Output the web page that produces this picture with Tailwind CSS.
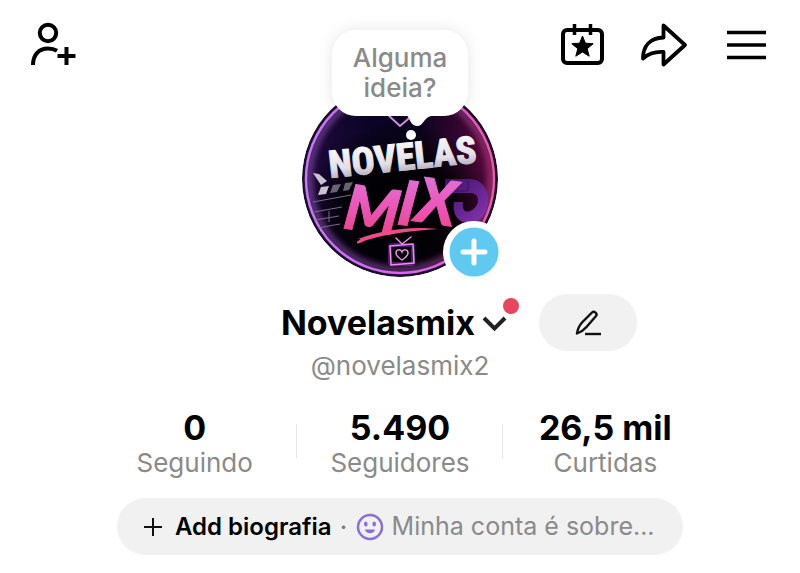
<!DOCTYPE html>
<html lang="pt-BR">
<head>
    <meta charset="UTF-8">
    <meta name="viewport" content="width=device-width, initial-scale=1.0">
    <title>Novelasmix</title>
    <script src="https://cdn.jsdelivr.net/npm/@tailwindcss/browser@4"></script>
</head>
<body class="min-h-screen bg-white text-black font-['Inter','Liberation_Sans',sans-serif]">
    <!-- Top bar with avatar -->
    <header class="grid grid-cols-[1fr_auto_1fr] items-start px-7 pt-5">
        <button aria-label="Adicionar amigos" class="w-12 h-12">
            <svg viewBox="0 0 48 48" class="w-12 h-12" fill="none" stroke="#000" stroke-width="4">
                <circle cx="20" cy="13" r="8.2"/>
                <path d="M5 45C5 34.500 11 28.500 20 28.500C23.500 28.500 26.500 29.300 29 30.800"/>
                <path d="M38.500 27v18M29.500 36h18"/>
            </svg>
        </button>

        <div class="relative w-[196px] h-[196px] mt-[61px]">
            <!-- Profile picture -->
            <svg viewBox="0 0 196 196" class="w-full h-full rounded-full" role="img" aria-label="Novelas Mix">
                <defs>
                    <linearGradient id="ring" x1="0" y1="0" x2="1" y2="0">
                        <stop offset="0" stop-color="#c57af5"/>
                        <stop offset="0.6" stop-color="#d468ea"/>
                        <stop offset="1" stop-color="#e65aa8"/>
                    </linearGradient>
                    <linearGradient id="bg" x1="0" y1="0" x2="1" y2="0">
                        <stop offset="0" stop-color="#1d0838"/>
                        <stop offset="0.35" stop-color="#0c0528"/>
                        <stop offset="0.6" stop-color="#0c0420"/>
                        <stop offset="1" stop-color="#57083c"/>
                    </linearGradient>
                    <radialGradient id="shade" cx="0.5" cy="0.68" r="0.5">
                        <stop offset="0" stop-color="#000"/>
                        <stop offset="0.6" stop-color="#000" stop-opacity="0.8"/>
                        <stop offset="1" stop-color="#000" stop-opacity="0"/>
                    </radialGradient>
                    <linearGradient id="silver" x1="0" y1="0" x2="0" y2="1">
                        <stop offset="0" stop-color="#fff"/>
                        <stop offset="0.6" stop-color="#e4dfe8"/>
                        <stop offset="1" stop-color="#96909f"/>
                    </linearGradient>
                    <linearGradient id="pink" x1="0" y1="0" x2="0" y2="1">
                        <stop offset="0.1" stop-color="#dd78de"/>
                        <stop offset="0.55" stop-color="#ec55b5"/>
                        <stop offset="0.9" stop-color="#ee3f80"/>
                    </linearGradient>
                    <linearGradient id="violet" x1="0" y1="0" x2="1" y2="1">
                        <stop offset="0" stop-color="#3b1263"/>
                        <stop offset="1" stop-color="#8a35b5"/>
                    </linearGradient>
                    <filter id="glow" x="-20%" y="-20%" width="140%" height="140%">
                        <feGaussianBlur stdDeviation="3"/>
                    </filter>
                </defs>
                <circle cx="98" cy="98" r="98" fill="#0a0216"/>
                <circle cx="98" cy="98" r="93" fill="url(#bg)"/>
                <circle cx="98" cy="98" r="93" fill="url(#shade)"/>
                <circle cx="98" cy="98" r="91" fill="none" stroke="url(#ring)" stroke-width="6" opacity="0.5" filter="url(#glow)"/>
                <circle cx="98" cy="98" r="94" fill="none" stroke="url(#ring)" stroke-width="2.500"/>
                <path d="M85 33l13 12 14-12" fill="none" stroke="#d394dc" stroke-width="2"/>
                <!-- clapperboard -->
                <g fill="#c9c3d0">
                    <path d="M11 92l6 1 8 7-6 4z"/>
                    <path d="M19 106l8-1-3 8-8 1z"/>
                    <path d="M31 104l8-1-4 8-7 1zM43 102l8-1-4 8-6 1z" opacity="0.5"/>
                </g>
                <path d="M11 121l38-7M12 131l28-5M13 139l24-4M16 147l22-4M27 130v11" fill="none" stroke="#77707f" stroke-width="1"/>
                <!-- big letter shape behind the title -->
                <path d="M143 98h24c14 0 21 12 19 25-2 12-9 19-19 19-11 0-17-9-15-21h9c-1 8 2 11 7 9 9-3 12-17 1-18h-26z" fill="url(#violet)"/>
                <path d="M143 110h23V99" fill="none" stroke="#3b1263" stroke-width="1"/>
                <text x="28" y="97" transform="rotate(-6 28 97)" font-family="'Roboto Condensed',Roboto,sans-serif" font-weight="800" font-size="38" fill="url(#silver)" stroke="url(#silver)" stroke-width="1">NOVELAS</text>
                <text x="40 94 112" y="147 143 140" rotate="8" font-family="Lato,sans-serif" font-style="italic" font-weight="900" font-size="62" fill="url(#pink)" stroke="url(#pink)" stroke-width="1">MIX</text>
                <path d="M56 158C80 149 108 145 136 148C108 150 84 153 65 159C58 162 54 164 55 161C58 158 60 158 56 158Z" fill="#ef4b88"/>
                <!-- neon tv -->
                <g fill="none" stroke="#8c2fc0" stroke-width="4" opacity="0.5">
                    <rect x="88" y="164" width="23" height="19" rx="2"/>
                </g>
                <g fill="none" stroke="#ee8bea" stroke-width="1.500" stroke-linecap="round">
                    <path d="M88 165l23-2 1 19-23 2zM94 157l6 6 9-7"/>
                    <path d="M100 179c-3-2-6-4-6-7 0-4 5-4 6-1 1-3 6-3 6 1 0 3-3 5-6 7z"/>
                </g>
            </svg>

            <!-- Thought bubble -->
            <button class="absolute left-[30px] -top-[51px] w-[136px] h-[86px] rounded-3xl bg-white shadow-[0_0_16px_rgba(0,0,0,0.1)] text-[26px] leading-[30px] font-medium text-[#8a8a8a]">
                Alguma<br>ideia?
            </button>
            <svg viewBox="0 0 30 30" class="absolute left-[100px] top-[30px] w-[30px] h-[30px]" fill="#fff">
                <path d="M4 4c4 2 4 11 11 11s6-8 14-10V0H4z"/>
                <circle cx="9" cy="24" r="5"/>
            </svg>

            <button aria-label="Criar" class="absolute left-[141px] top-[140px] w-[62px] h-[62px] rounded-full bg-white flex items-center justify-center">
                <svg viewBox="0 0 50 50" class="w-[50px] h-[50px]">
                    <circle cx="25" cy="25" r="24.500" fill="#5fc9f1"/>
                    <path d="M25 14v22M14 25h22" stroke="#fff" stroke-width="5" stroke-linecap="round"/>
                </svg>
            </button>
        </div>

        <nav class="flex justify-end gap-[33px] pr-[3px]">
            <button aria-label="Eventos" class="w-12 h-12">
                <svg viewBox="0 0 48 48" class="w-12 h-12" fill="none" stroke="#000" stroke-width="4">
                    <rect x="4" y="10" width="39" height="33" rx="4"/>
                    <path d="M15.500 4v11M31.500 4v11" stroke-width="3.500"/>
                    <path d="M23.500 16l2.900 7.200 7.800.5-6 5 2 7.500-6.700-4.200-6.700 4.200 2-7.500-6-5 7.800-.5z" fill="#000" stroke-width="1"/>
                </svg>
            </button>
            <button aria-label="Compartilhar" class="w-12 h-12">
                <svg viewBox="0 0 48 48" class="w-12 h-12" fill="none" stroke="#000" stroke-width="3.800" stroke-linejoin="round">
                    <path d="M23.500 5.500L45 25L23.500 44.500V32C15 31.500 8 34 3 38.500C3 26 10 18 23.500 17.500Z"/>
                </svg>
            </button>
            <button aria-label="Menu" class="w-12 h-12">
                <svg viewBox="0 0 48 48" class="w-12 h-12" stroke="#000" stroke-width="3.500">
                    <path d="M6 12.500h39M6 25h39M6 37.500h39"/>
                </svg>
            </button>
        </nav>
    </header>

    <main class="flex flex-col items-center">
        <!-- Name -->
        <div class="w-full grid grid-cols-[1fr_auto_1fr] items-center mt-[17px]">
            <button class="col-start-2 flex items-center">
                <h1 class="text-[34px] leading-[42px] font-bold">Novelasmix</h1>
                <svg viewBox="0 0 40 44" class="w-10 h-11 ml-1 overflow-visible" fill="none">
                    <path d="M5 17l10.500 10.500L26 17" stroke="#222" stroke-width="4"/>
                    <circle cx="32" cy="5" r="8" fill="#e8455f"/>
                </svg>
            </button>
            <button aria-label="Editar perfil" class="ml-5 w-[98px] h-[57px] rounded-full bg-[#f1f1f1] flex items-center justify-center">
                <svg viewBox="0 0 28 28" class="w-7 h-7" fill="none" stroke="#111" stroke-width="2.400" stroke-linejoin="round">
                    <path d="M3 24.500C3.500 20 5 17 8 13.500L18 3.500C20 1.500 24 4.500 22 7L12.500 18C9.500 21.500 7 23 3 24.500Z"/>
                    <path d="M11 25h16"/>
                </svg>
            </button>
        </div>
        <p class="text-[26px] leading-[30px] text-[#8a8a8a]">@novelasmix2</p>

        <!-- Stats -->
        <div class="w-full max-w-[616px] grid grid-cols-3 mt-[29px] text-center">
            <a href="#" class="relative">
                <strong class="block text-[34px] leading-9 font-bold">0</strong>
                <span class="block text-[26px] leading-[34px] text-[#8a8a8a]">Seguindo</span>
                <span class="absolute right-0 top-[14px] w-px h-[34px] bg-[#e4e4e4]"></span>
            </a>
            <a href="#" class="relative">
                <strong class="block text-[34px] leading-9 font-bold">5.490</strong>
                <span class="block text-[26px] leading-[34px] text-[#8a8a8a]">Seguidores</span>
                <span class="absolute right-0 top-[14px] w-px h-[34px] bg-[#e4e4e4]"></span>
            </a>
            <a href="#">
                <strong class="block text-[34px] leading-9 font-bold">26,5 mil</strong>
                <span class="block text-[26px] leading-[34px] text-[#8a8a8a]">Curtidas</span>
            </a>
        </div>

        <!-- Bio -->
        <button class="mt-[18px] w-[566px] max-w-full h-[57px] pl-[26px] rounded-full bg-[#f1f1f1] flex items-center whitespace-nowrap">
            <svg viewBox="0 0 20 20" class="w-5 h-5 mr-3" stroke="#111" stroke-width="2">
                <path d="M10 1v18M1 10h18"/>
            </svg>
            <span class="text-[24px] font-semibold">Add biografia</span>
            <span class="w-6 text-center text-[26px] text-[#777]">·</span>
            <svg viewBox="0 0 28 28" class="w-7 h-7 mr-2" fill="none">
                <circle cx="14" cy="14" r="12" stroke="#8b6ed6" stroke-width="2.500"/>
                <ellipse cx="9.800" cy="11" rx="1.800" ry="2.500" fill="#8b6ed6"/>
                <ellipse cx="18.200" cy="11" rx="1.800" ry="2.500" fill="#8b6ed6"/>
                <path d="M9 16.500h10c-.5 5-9.500 5-10 0z" fill="#8b6ed6"/>
            </svg>
            <span class="text-[25px] text-[#8a8a8a]">Minha conta é sobre...</span>
        </button>
    </main>
</body>
</html>
